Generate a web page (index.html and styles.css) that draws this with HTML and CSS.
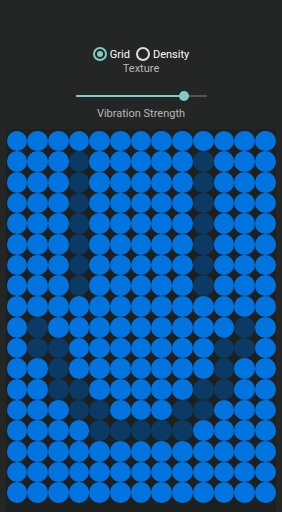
FILE: index.html
```html
<!DOCTYPE html>
<html lang="en">
<head>
    <meta charset="UTF-8">
    <meta name="viewport" content="width=device-width, initial-scale=1.0">
    <title>Haptic Texture</title>
    <link rel="stylesheet" href="styles.css">
</head>
<body>

<div class="controls">
    <div class="radio-row">
        <label class="radio"><span class="ring checked"></span>Grid</label>
        <label class="radio"><span class="ring"></span>Density</label>
    </div>
    <div class="caption">Texture</div>

    <div class="slider">
        <div class="track">
            <div class="fill"></div>
            <div class="thumb"></div>
        </div>
    </div>
    <div class="caption">Vibration Strength</div>
</div>

<div id="pad" class="pad"></div>

<script>
    const pattern = [
        ".............",
        "...#.....#...",
        "...#.....#...",
        "...#.....#...",
        "...#.....#...",
        "...#.....#...",
        "...#.....#...",
        "...#.....#...",
        ".............",
        ".#.........#.",
        ".##.......##.",
        "..#.......#..",
        "..##.....##..",
        "...##...##...",
        "....#####....",
        ".............",
        ".............",
        "............."
    ];

    const pad = document.getElementById('pad');
    pattern.forEach(function (row) {
        for (let i = 0; i < row.length; i++) {
            const dot = document.createElement('div');
            dot.className = row[i] === '#' ? 'dot active' : 'dot';
            pad.appendChild(dot);
        }
    });
</script>

</body>
</html>
```

FILE: styles.css
```css
body {
    margin: 0;
    background: #242525;
    font-family: 'Roboto', 'Noto Sans', sans-serif;
    font-size: 11px;
    color: #b8b8b8;
}
.controls {
    display: flex;
    flex-direction: column;
    align-items: center;
    padding-top: 46px;
}
.radio-row {
    display: flex;
    align-items: center;
    height: 16px;
    gap: 6px;
}
.radio {
    display: flex;
    align-items: center;
    gap: 3px;
    color: #ffffff;
}
.ring {
    box-sizing: border-box;
    width: 14px;
    height: 14px;
    border: 2px solid #dedede;
    border-radius: 50%;
    display: flex;
    align-items: center;
    justify-content: center;
}
.ring.checked {
    border-color: #80cbc4;
}
.ring.checked::after {
    content: "";
    width: 6px;
    height: 6px;
    border-radius: 50%;
    background: #80cbc4;
}
.caption {
    height: 14px;
    line-height: 14px;
}
.slider {
    margin-top: 14px;
    margin-bottom: 5px;
    height: 12px;
    display: flex;
    align-items: center;
}
.track {
    position: relative;
    width: 131px;
    height: 2px;
    background: #555757;
}
.fill {
    width: 108px;
    height: 2px;
    background: #80cbc4;
}
.thumb {
    position: absolute;
    left: 103px;
    top: -4px;
    width: 10px;
    height: 10px;
    border-radius: 50%;
    background: #80cbc4;
}
.pad {
    margin: 8px 6px 0 6px;
    padding: 1.5px 0.5px 0 0.5px;
    background: #1e2020;
    display: grid;
    grid-template-columns: repeat(13, 1fr);
    height: 390px;
    align-content: start;
}
.dot {
    aspect-ratio: 1;
    border-radius: 50%;
    background: #0274e0;
}
.dot.active {
    background: #0b3a64;
}
```
